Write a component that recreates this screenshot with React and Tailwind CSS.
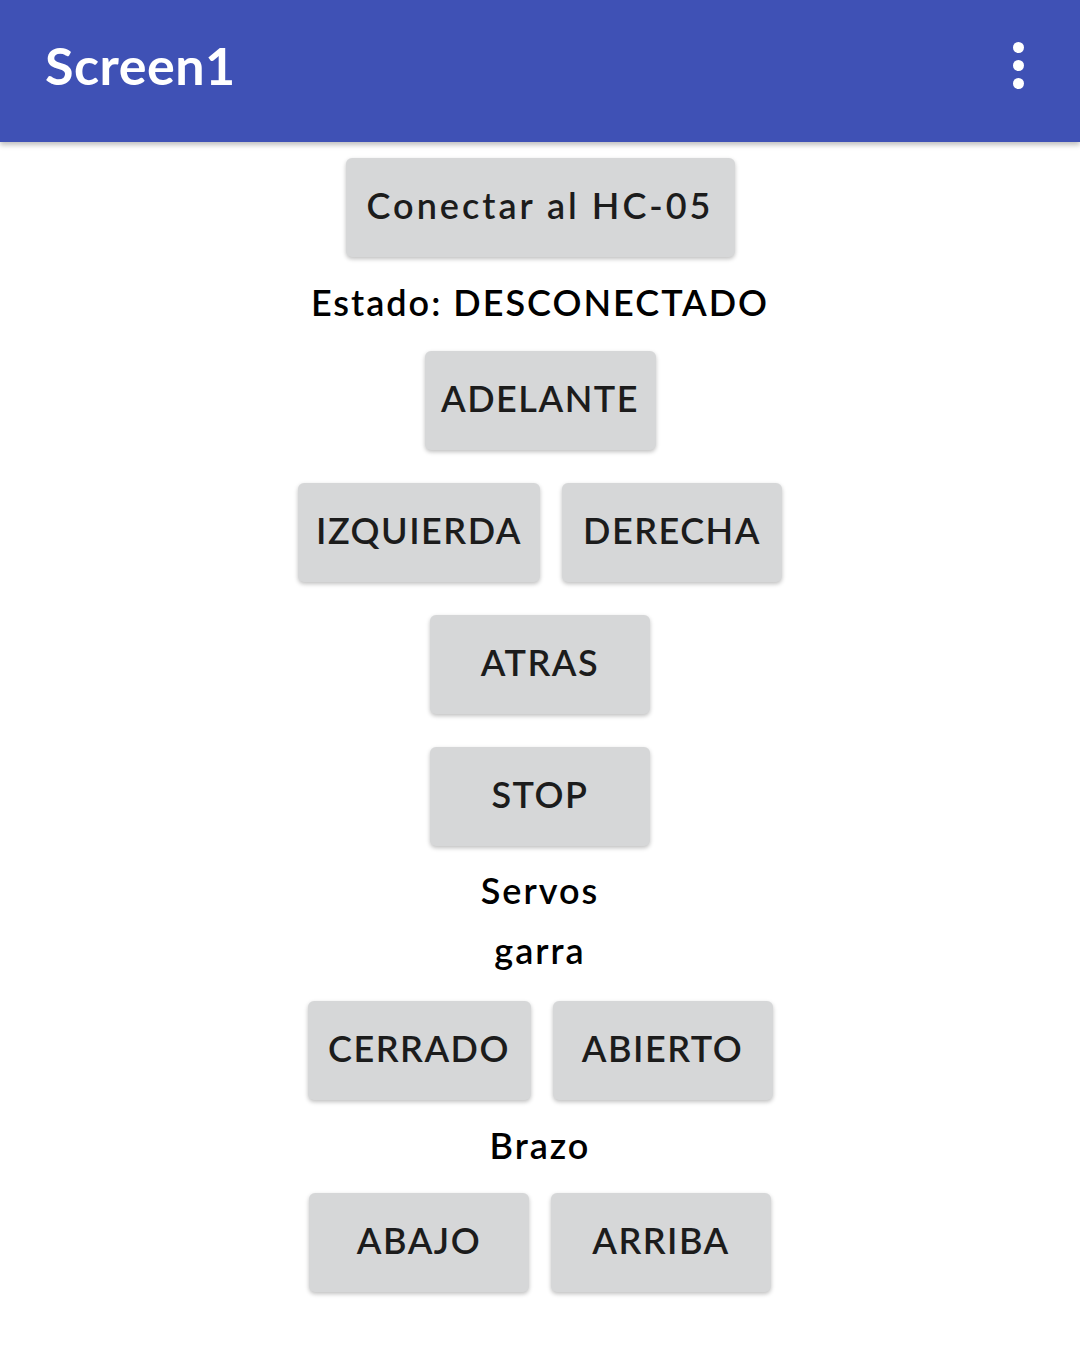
import React from "react";

function Btn({ w, children, track = "tracking-[1.5px]" }) {
  return (
    <div
      className={"h-[99px] pb-[6px] flex items-center justify-center rounded-[6px] bg-[#d6d7d8] text-[#1c1c1c] text-[36px] font-semibold shadow-[0_2px_4px_rgba(0,0,0,0.25)] " + track}
      style={{ width: w }}
    >
      {children}
    </div>
  );
}

export default function App() {
  return (
    <div className="w-[1080px] h-[1347px] bg-white flex flex-col" style={{ fontFamily: "Lato, 'Liberation Sans', sans-serif" }}>
      <div className="h-[142px] shrink-0 bg-[#3f51b5] flex items-center justify-between pl-[45px] pr-[56px] shadow-[0_3px_5px_rgba(0,0,0,0.25)] relative z-10">
        <div className="text-white text-[52px] font-bold tracking-[0.5px] leading-none -mt-[12px]">Screen1</div>
        <div className="flex flex-col gap-[7px] -mt-[12px]">
          <div className="w-[11px] h-[11px] rounded-full bg-white" />
          <div className="w-[11px] h-[11px] rounded-full bg-white" />
          <div className="w-[11px] h-[11px] rounded-full bg-white" />
        </div>
      </div>
      <div className="flex flex-col items-center">
        <div className="mt-[16px]">
          <Btn w={389} track="tracking-[3px]">Conectar al HC-05</Btn>
        </div>
        <div className="h-[94px] pb-[4px] flex items-center text-[36px] font-semibold tracking-[2px] text-black">Estado: DESCONECTADO</div>
        <Btn w={231}>ADELANTE</Btn>
        <div className="mt-[33px] flex gap-[22px] ml-[0px]">
          <Btn w={242}>IZQUIERDA</Btn>
          <Btn w={220}>DERECHA</Btn>
        </div>
        <div className="mt-[33px]">
          <Btn w={220}>ATRAS</Btn>
        </div>
        <div className="mt-[33px]">
          <Btn w={220}>STOP</Btn>
        </div>
        <div className="mt-[16px] h-[60px] pb-[4px] flex items-center text-[36px] font-semibold tracking-[2px] text-black">Servos</div>
        <div className="h-[60px] pb-[4px] flex items-center text-[36px] font-semibold tracking-[2px] text-black">garra</div>
        <div className="mt-[19px] flex gap-[22px]">
          <Btn w={223}>CERRADO</Btn>
          <Btn w={220}>ABIERTO</Btn>
        </div>
        <div className="h-[93px] pb-[4px] flex items-center text-[36px] font-semibold tracking-[2px] text-black">Brazo</div>
        <div className="flex gap-[22px]">
          <Btn w={220}>ABAJO</Btn>
          <Btn w={220}>ARRIBA</Btn>
        </div>
      </div>
    </div>
  );
}
